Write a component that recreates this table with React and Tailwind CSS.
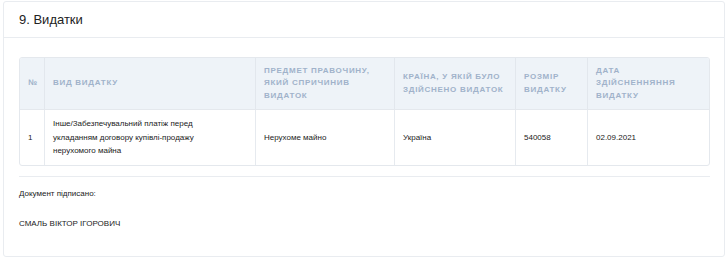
import React from 'react';

const headers = [
  ['№'],
  ['ВИД ВИДАТКУ'],
  ['ПРЕДМЕТ ПРАВОЧИНУ,', 'ЯКИЙ СПРИЧИНИВ', 'ВИДАТОК'],
  ['КРАЇНА, У ЯКІЙ БУЛО', 'ЗДІЙСНЕНО ВИДАТОК'],
  ['РОЗМІР', 'ВИДАТКУ'],
  ['ДАТА', 'ЗДІЙСНЕННЯННЯ', 'ВИДАТКУ'],
];

const row = [
  ['1'],
  ['Інше/Забезпечувальний платіж перед', 'укладанням договору купівлі-продажу', 'нерухомого майна'],
  ['Нерухоме майно'],
  ['Україна'],
  ['540058'],
  ['02.09.2021'],
];

const App = () => {
  return (
    <div className="bg-white pl-[3px] pr-[2px] pt-px font-['Liberation_Sans',Arial,sans-serif]">
      <div className="border border-[#e9ecf0] rounded-[3px] h-[256px] flex flex-col">
        <div className="h-[36px] border-b border-[#e9ecf0] flex items-center px-[15px]">
          <h2 className="text-[13px] text-[#222] leading-none">9. Видатки</h2>
        </div>

        <div className="pt-[19px] pl-[15px] pr-[14px]">
          <div className="border border-[#e4e8ed] rounded-[3px] overflow-hidden">
            <div className="grid grid-cols-[24px_211px_139px_121px_72px_1fr] bg-[#eef3f8] h-[52px] border-b border-[#e4e8ed]">
              {headers.map((lines, i) => (
                <div
                  key={i}
                  className={`flex items-center px-[8px] ${i > 0 ? 'border-l border-[#e2e7ed]' : ''}`}
                >
                  <div className="text-[8px] font-bold tracking-[0.09em] leading-[12.5px] text-[#a0b2ca]">
                    {lines.map((l, j) => (
                      <div key={j}>{l}</div>
                    ))}
                  </div>
                </div>
              ))}
            </div>
            <div className="grid grid-cols-[24px_211px_139px_121px_72px_1fr] h-[55px]">
              {row.map((lines, i) => (
                <div
                  key={i}
                  className={`flex items-center px-[8px] ${i > 0 ? 'border-l border-[#e6eaef]' : ''}`}
                >
                  <div className="text-[8px] leading-[13.5px] text-[#222]">
                    {lines.map((l, j) => (
                      <div key={j}>{l}</div>
                    ))}
                  </div>
                </div>
              ))}
            </div>
          </div>

          <div className="mt-[10px] border-t border-[#e9ecf0]" />

          <p className="mt-[10px] text-[8px] leading-[14px] text-[#222]">Документ підписано:</p>
          <p className="mt-[16px] text-[8px] leading-[14px] text-[#222]">СМАЛЬ ВІКТОР ІГОРОВИЧ</p>
        </div>
      </div>
    </div>
  );
};

export default App;
